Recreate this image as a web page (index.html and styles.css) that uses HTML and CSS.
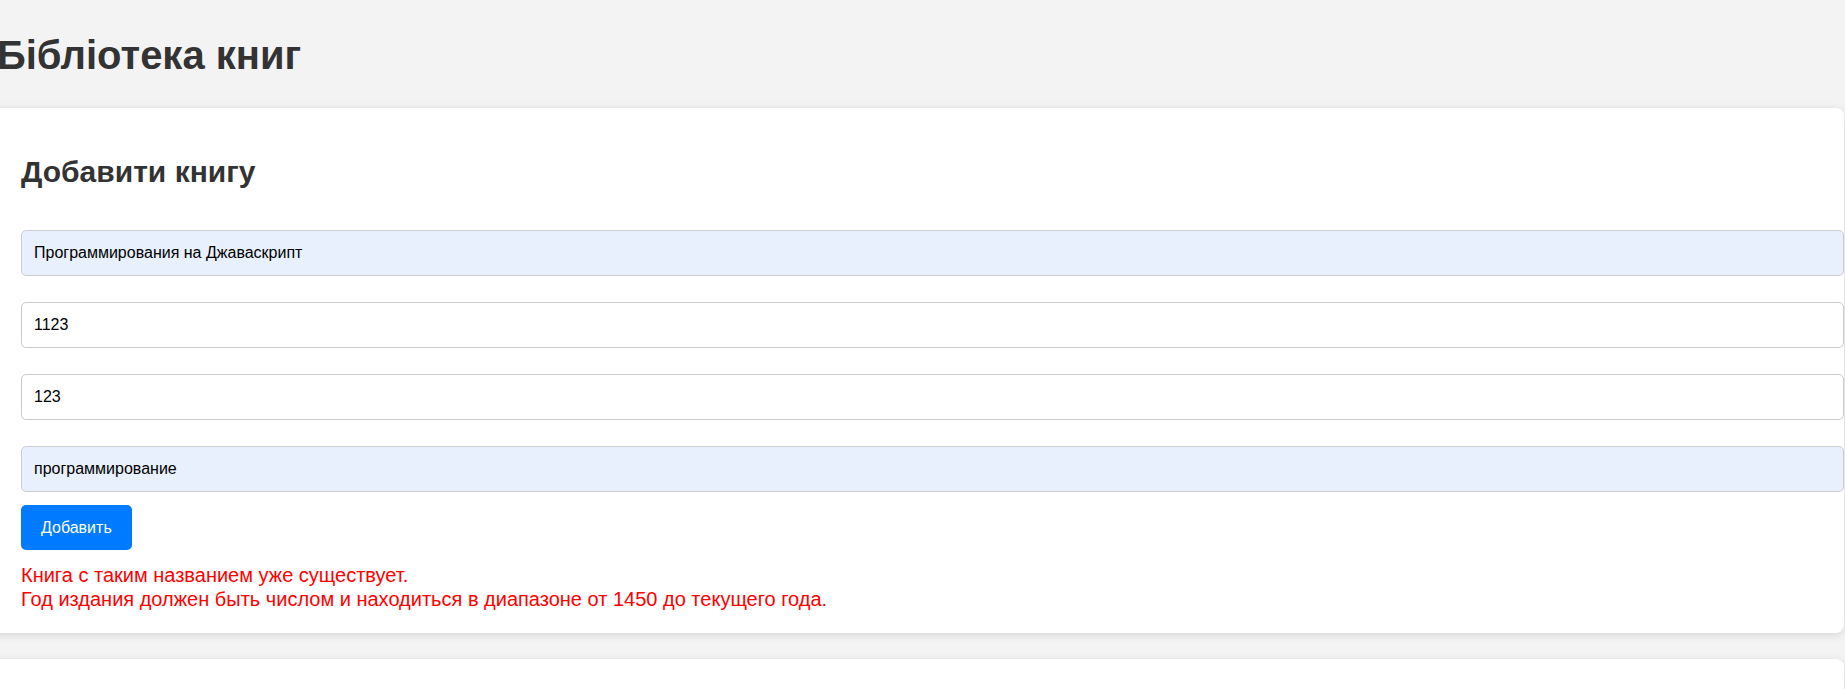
FILE: index.html
```html
<!DOCTYPE html>
<html lang="uk">
<head>
<meta charset="utf-8">
<title>Бібліотека книг</title>
<link rel="stylesheet" href="styles.css">
</head>
<body>
<div class="app">
  <h1 class="title">Бібліотека книг</h1>
  <section class="card">
    <h2 class="card-title">Добавити книгу</h2>
    <form class="book-form">
      <input class="field field-filled" type="text" value="Программирования на Джаваскрипт">
      <input class="field" type="text" value="1123">
      <input class="field" type="text" value="123">
      <input class="field field-filled field-last" type="text" value="программирование">
      <button class="btn" type="button">Добавить</button>
      <div class="errors">
        <div class="error">Книга с таким названием уже существует.</div>
        <div class="error">Год издания должен быть числом и находиться в диапазоне от 1450 до текущего года.</div>
      </div>
    </form>
  </section>
  <section class="card card-list"></section>
</div>
</body>
</html>
```
FILE: styles.css
```css
html {
  background: #f3f3f3;
}
body {
  margin: 0;
  background: #f3f3f3;
  font-family: "Liberation Sans", Arial, sans-serif;
  color: #333;
  overflow: hidden;
}
.app {
  display: flex;
  flex-direction: column;
  align-items: flex-start;
}
.title {
  margin: 32px 0 30px -3px;
  font-size: 40px;
  line-height: 46px;
  font-weight: bold;
  color: #333;
}
.card {
  box-sizing: border-box;
  width: 1854px;
  margin-left: -10px;
  background: #fff;
  border-radius: 8px;
  box-shadow: 0 2px 8px rgba(0, 0, 0, 0.12);
  padding: 47px 0 22px 31px;
}
.card-title {
  margin: 0 0 41px;
  font-size: 30px;
  line-height: 34px;
  font-weight: bold;
  color: #333;
}
.book-form {
  display: flex;
  flex-direction: column;
  align-items: flex-start;
}
.field {
  box-sizing: border-box;
  width: 100%;
  height: 46px;
  margin: 0 0 26px;
  padding: 0 12px;
  border: 1px solid #ccc;
  border-radius: 5px;
  background: #fff;
  font-family: "Liberation Sans", Arial, sans-serif;
  font-size: 16px;
  color: #000;
  outline: none;
}
.field-filled {
  background: #e8f0fe;
}
.field-last {
  margin-bottom: 13px;
}
.btn {
  height: 45px;
  padding: 0 20px;
  border: none;
  border-radius: 5px;
  background: #007bff;
  color: #fff;
  font-family: "Liberation Sans", Arial, sans-serif;
  font-size: 16px;
  cursor: pointer;
}
.errors {
  margin-top: 13px;
}
.error {
  color: #ff0000;
  font-size: 20px;
  line-height: 24px;
}
.card-list {
  margin-top: 26px;
  height: 120px;
  padding: 0;
}
```
